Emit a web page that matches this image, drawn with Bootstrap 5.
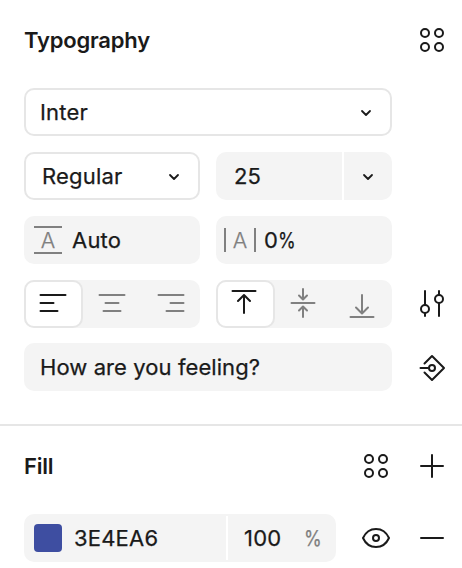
<!DOCTYPE html>
<html lang="en">
<head>
<meta charset="utf-8">
<meta name="viewport" content="width=device-width, initial-scale=1">
<title>Typography panel</title>
<link href="https://cdn.jsdelivr.net/npm/bootstrap@5.3.0/dist/css/bootstrap.min.css" rel="stylesheet">
<style>
  body { font-family: Inter, "Liberation Sans", sans-serif; font-size: 22px; font-weight: 400; line-height: 32px; letter-spacing: .2px; -webkit-text-stroke: .25px currentColor; color: #1a1a1a; background: #fff; overflow: hidden; }
  svg { display: block; flex: none; fill: none; stroke: currentColor; stroke-width: 2; stroke-linecap: round; stroke-linejoin: round; }
  .panel { padding-left: 24px; padding-right: 6px; }
  .line48 { height: 48px; }
  .fields { width: 368px; }
  .title { font-size: 22px; font-weight: 600; line-height: 32px; letter-spacing: -.2px; -webkit-text-stroke: 0; }
  .box, .seg { height: 48px; border-radius: 10px; background: #f4f4f4; }
  .outlined { background: #fff; border: 2px solid #e6e6e6; }
  .half { width: 176px; }
  .seg-on { width: 59px; height: 48px; border-radius: 10px; }
  .seg-off { width: 59px; }
  .muted { color: #808080; }
  .prompt { letter-spacing: .08px; }
  .glyph-a { font-weight: 300; letter-spacing: 0; font-size: 21.5px; text-align: center; line-height: 24px; }
  .leading { width: 28px; height: 28px; border-top: 2px solid #808080; border-bottom: 2px solid #808080; margin-left: 10px; margin-right: 10px; }
  .tracking { width: 32px; height: 24px; border-left: 2px solid #808080; border-right: 2px solid #808080; margin-left: 8px; margin-right: 8px; }
  .pct { display: inline-block; transform: scaleX(.82); transform-origin: left; }
  .pct-end { transform-origin: right; }
  .chev { stroke-width: 1.8; }
  .split { width: 2px; background: #fff; }
  .rule { height: 2px; background: #e6e6e6; margin-top: 33px; }
  .swatch { width: 28px; height: 28px; border-radius: 4px; background: #3e4ea1; margin-left: 10px; margin-right: 12px; }
</style>
</head>
<body>
<section class="panel pt-3">
  <div class="d-flex align-items-center justify-content-between line48">
    <h2 class="title mb-0">Typography</h2>
    <svg width="48" height="48"><circle cx="17" cy="17" r="4"/><circle cx="31" cy="17" r="4"/><circle cx="17" cy="31" r="4"/><circle cx="31" cy="31" r="4"/></svg>
  </div>

  <div class="fields mt-4 d-flex flex-column gap-3">
    <div class="box outlined d-flex align-items-center justify-content-between">
      <span style="padding-left:14px">Inter</span>
      <svg class="chev" width="48" height="44"><path d="M20 21l4 4 4-4"/></svg>
    </div>
    <div class="d-flex gap-3">
      <div class="box outlined half d-flex align-items-center justify-content-between">
        <span class="ps-3">Regular</span>
        <svg class="chev" width="48" height="44"><path d="M20 21l4 4 4-4"/></svg>
      </div>
      <div class="box half d-flex align-items-center">
        <span class="flex-grow-1" style="padding-left:18px">25</span>
        <span class="split align-self-stretch"></span>
        <svg class="chev" width="48" height="48"><path d="M20 23l4 4 4-4"/></svg>
      </div>
    </div>
    <div class="d-flex gap-3">
      <div class="box half d-flex align-items-center">
        <span class="leading glyph-a muted">A</span><span>Auto</span>
      </div>
      <div class="box half d-flex align-items-center">
        <span class="tracking glyph-a muted">A</span><span>0<span class="pct">%</span></span>
      </div>
    </div>
  </div>

  <div class="d-flex mt-3">
    <div class="fields d-flex gap-3">
      <div class="seg half d-flex">
        <div class="seg-on outlined"><svg width="55" height="44"><path d="M14.5 13h25M14.5 21h13M14.5 29h17"/></svg></div>
        <div class="seg-off muted"><svg width="59" height="48"><path d="M16.5 15h25M22.5 23h13M20.5 31h17"/></svg></div>
        <div class="seg-off muted"><svg width="58" height="48"><path d="M16.5 15h25M28.5 23h13M24.5 31h17"/></svg></div>
      </div>
      <div class="seg half d-flex">
        <div class="seg-on outlined"><svg width="55" height="44"><path d="M14.5 9h23M26 13v18M20 19l6-6 6 6"/></svg></div>
        <div class="seg-off muted"><svg width="59" height="48"><path d="M16.5 23h23M28 9v10M24 15.5l4 4 4-4M28 37v-10M24 30.5l4-4 4 4"/></svg></div>
        <div class="seg-off muted"><svg width="58" height="48"><path d="M16.5 37h23M28 15v18M22 27.5l6 6 6-6"/></svg></div>
      </div>
    </div>
    <svg class="ms-3" width="48" height="48"><path d="M17 11v14M17 33v3M31 11v4M31 23v13"/><circle cx="17" cy="29" r="4"/><circle cx="31" cy="19" r="4"/></svg>
  </div>

  <div class="d-flex" style="margin-top:15px">
    <div class="box fields prompt ps-3 d-flex align-items-center">How are you feeling?</div>
    <svg class="ms-3" width="48" height="48"><path d="M16.5 20.5l7.5-7.5 12 12-12 12-7.5-7.5M12.5 25h7.5"/><circle cx="24" cy="25" r="3"/></svg>
  </div>
</section>

<div class="rule"></div>

<section class="panel pt-3">
  <div class="d-flex align-items-center line48">
    <h2 class="title mb-0 me-auto">Fill</h2>
    <svg width="48" height="48"><circle cx="17" cy="17" r="4"/><circle cx="31" cy="17" r="4"/><circle cx="17" cy="31" r="4"/><circle cx="31" cy="31" r="4"/></svg>
    <svg class="ms-2" width="48" height="48"><path d="M24 13v22M13 24h22"/></svg>
  </div>
  <div class="d-flex mt-4">
    <div class="box d-flex align-items-center" style="width:312px">
      <span class="swatch"></span><span class="flex-grow-1">3E4EA6</span>
      <span class="split" style="height:44px"></span>
      <span class="d-flex justify-content-between" style="width:108px;padding:0 14px 0 16px"><span>100</span><span class="muted pct pct-end">%</span></span>
    </div>
    <svg style="margin-left:16px" width="48" height="48"><path d="M11 24C13.5 18.5 18 15 24 15s10.5 3.5 13 9c-2.5 5.5-7 9-13 9s-10.5-3.5-13-9z"/><circle cx="24" cy="24" r="3"/></svg>
    <svg class="ms-2" width="48" height="48"><path d="M13 24h22"/></svg>
  </div>
</section>
<script src="https://cdn.jsdelivr.net/npm/bootstrap@5.3.0/dist/js/bootstrap.bundle.min.js"></script>
</body>
</html>
